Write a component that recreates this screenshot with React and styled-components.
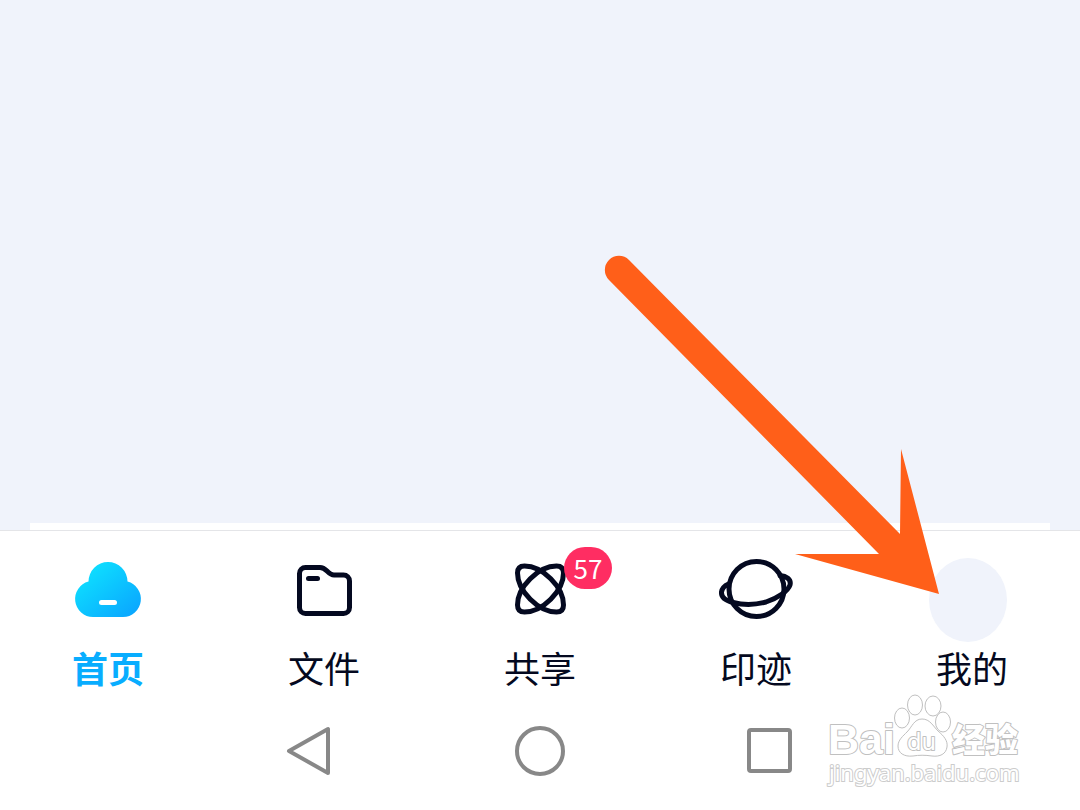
import React, { useState } from "react";
import styled, { createGlobalStyle } from "styled-components";

const GlobalStyle = createGlobalStyle`
	body {
		margin: 0;
		background: #f0f3fb;
		font-family: "Noto Sans CJK SC", "Noto Sans", sans-serif;
	}
`;

const Screen = styled.div`
	position: relative;
	display: flex;
	flex-direction: column;
	min-height: 100vh;
	overflow: hidden;
`;

const Content = styled.main`
	flex: 1;
	display: flex;
	flex-direction: column;
	justify-content: flex-end;
	padding: 0 30px;
	background: #f0f3fb;
`;

const CardEdge = styled.div`
	height: 7px;
	background: #fff;
`;

const TabBar = styled.nav`
	display: grid;
	grid-template-columns: repeat(5, 1fr);
	padding-top: 27px;
	border-top: 1px solid #e4e5e8;
	background: #fff;
`;

const Tab = styled.button`
	display: flex;
	flex-direction: column;
	align-items: center;
	gap: 23px;
	padding: 0;
	border: 0;
	background: none;
	color: ${({ $active }) => ($active ? "#08adff" : "#040920")};
	font-family: inherit;
	font-size: 36px;
	font-weight: ${({ $active }) => ($active ? 700 : 400)};
	line-height: 44px;
	cursor: pointer;
`;

const IconSlot = styled.span`
	position: relative;
	width: 80px;
	height: 64px;
`;

const Icon = styled.svg`
	display: block;
	width: 80px;
	height: 64px;
	fill: none;
	stroke: #040920;
	stroke-width: 5px;
	stroke-linecap: round;
	stroke-linejoin: round;
`;

const Badge = styled.span`
	position: absolute;
	top: -11px;
	right: -32px;
	min-width: 48px;
	border-radius: 21px;
	background: #ff2d62;
	color: #fff;
	font-size: 26px;
	font-weight: 400;
	line-height: 42px;
	text-align: center;
`;

const SoftKeys = styled.nav`
	display: grid;
	grid-template-columns: repeat(3, 1fr);
	justify-items: center;
	padding: 37px 18% 34px;
	background: #fff;
`;

const SoftKey = styled.button`
	padding: 0;
	border: 0;
	background: none;
	cursor: pointer;

	svg {
		display: block;
		width: 56px;
		height: 50px;
		fill: none;
		stroke: #888;
		stroke-width: 4px;
		stroke-linejoin: round;
	}
`;

const Pointer = styled.svg`
	position: absolute;
	right: 0;
	bottom: 160px;
	width: 480px;
	height: 400px;
	pointer-events: none;
`;

const Watermark = styled.div`
	position: absolute;
	right: 55px;
	bottom: 24px;
	width: 200px;
	pointer-events: none;
`;

const Logo = styled.svg`
	display: block;
	width: 200px;
	height: 68px;
	overflow: visible;
	fill: #fff;
	stroke: #c0c0c0;
	stroke-width: 1px;

	text {
		stroke-width: 2px;
		stroke-linejoin: round;
		paint-order: stroke fill;
	}
`;

const SiteName = styled.div`
	padding-left: 4px;
	color: #fff;
	font-family: "Noto Sans", sans-serif;
	font-size: 22px;
	line-height: 28px;
	white-space: nowrap;
	-webkit-text-stroke: 2px #ccc;
	paint-order: stroke fill;
`;

const HomeIcon = () => (
	<Icon viewBox="0 0 80 64" aria-hidden="true">
		<defs>
			<linearGradient id="cloud" x1="0" y1="0" x2="1" y2="1">
				<stop offset="0.1" stopColor="#0ee3ff" />
				<stop offset="0.95" stopColor="#0aa5ff" />
			</linearGradient>
		</defs>
		<path
			d="M25 59A18 18 0 0 1 20.5 23.6A19.5 19.5 0 0 1 59.5 23.6A18 18 0 0 1 55 59Z"
			fill="url(#cloud)"
			stroke="none"
		/>
		<path d="M33.5 44.5H46.5" stroke="#fff" />
	</Icon>
);

const FilesIcon = () => (
	<Icon viewBox="0 0 80 64" aria-hidden="true">
		<path d="M21.5 9.5H36C39 9.5 41 11 43 13C45.5 15.5 47 17 50 17H59.5A6 6 0 0 1 65.5 23V49.5A6 6 0 0 1 59.5 55.5H21.5A6 6 0 0 1 15.5 49.5V15.5A6 6 0 0 1 21.5 9.5Z" />
		<path d="M24.5 20.5H33.5" />
	</Icon>
);

const orbit = "M-16 -23C-20.5 -23 -23 -20.5 -23 -16C-23 2 -2 23 16 23C20.5 23 23 20.5 23 16C23 -2 2 -23 -16 -23Z";

const ShareIcon = () => (
	<Icon viewBox="0 0 80 64" aria-hidden="true">
		<path d={orbit} transform="translate(40.5 31)" />
		<path d={orbit} transform="translate(40.5 31) rotate(90)" />
	</Icon>
);

const PlanetIcon = () => (
	<Icon viewBox="0 0 80 64" aria-hidden="true">
		<circle cx="40.5" cy="31" r="27.5" />
		<path d="M12.5 26C8 28 6 31 5.5 34C5 40 11 43 17 44.5C27 47 39 47 50 44C62 40 72 33 74 27C75.5 21 70 18 64 17.5" />
	</Icon>
);

const tabs = [
	{ id: "home", label: "首页", icon: HomeIcon },
	{ id: "files", label: "文件", icon: FilesIcon },
	{ id: "share", label: "共享", icon: ShareIcon, badge: 57 },
	{ id: "moments", label: "印迹", icon: PlanetIcon },
	{ id: "mine", label: "我的" },
];

const App = () => {
	const [active, setActive] = useState("home");

	return (
		<Screen>
			<GlobalStyle />
			<Content>
				<CardEdge />
			</Content>
			<TabBar>
				{tabs.map(({ id, label, icon: TabIcon, badge }) => (
					<Tab key={id} $active={active === id} onClick={() => setActive(id)}>
						<IconSlot>
							{TabIcon && <TabIcon />}
							{badge && <Badge>{badge}</Badge>}
						</IconSlot>
						{label}
					</Tab>
				))}
			</TabBar>
			<SoftKeys>
				<SoftKey aria-label="Back">
					<svg viewBox="0 0 56 50">
						<path d="M46 3V47L7 25Z" />
					</svg>
				</SoftKey>
				<SoftKey aria-label="Home">
					<svg viewBox="0 0 56 50">
						<circle cx="28" cy="25" r="23" />
					</svg>
				</SoftKey>
				<SoftKey aria-label="Recents">
					<svg viewBox="0 0 56 50">
						<rect x="7" y="4" width="41" height="41" rx="2" />
					</svg>
				</SoftKey>
			</SoftKeys>
			<Pointer viewBox="0 0 480 400" aria-hidden="true">
				<ellipse cx="368" cy="350" rx="39" ry="42" fill="#f0f3fb" />
				<path
					d="M29 10L300 284L301 199L339 344L195 304H279L9 30A14 14 0 0 1 29 10Z"
					fill="#ff5f19"
				/>
			</Pointer>
			<Watermark>
				<Logo viewBox="0 0 200 68">
					<text x="3" y="64" fontFamily="Liberation Sans" fontSize="43" fontWeight="700">
						Bai
					</text>
					<path d="M97 29C105 29 108 36 113 41C119 46 123 51 122 57C121 64 115 67 107 66C100 65 94 65 88 66C79 67 73 63 73 56C73 50 78 46 82 42C87 37 89 29 97 29Z" />
					<ellipse cx="77" cy="28" rx="7.5" ry="10" />
					<ellipse cx="90" cy="15" rx="7.5" ry="10" />
					<ellipse cx="108" cy="16" rx="8" ry="10" />
					<ellipse cx="118" cy="32" rx="7.5" ry="10" />
					<text x="82" y="60" fontFamily="DejaVu Sans" fontSize="23">
						du
					</text>
					<text x="127" y="62" fontFamily="Noto Sans CJK SC" fontSize="33" fontWeight="900">
						经验
					</text>
				</Logo>
				<SiteName>jingyan.baidu.com</SiteName>
			</Watermark>
		</Screen>
	);
};

export default App;
